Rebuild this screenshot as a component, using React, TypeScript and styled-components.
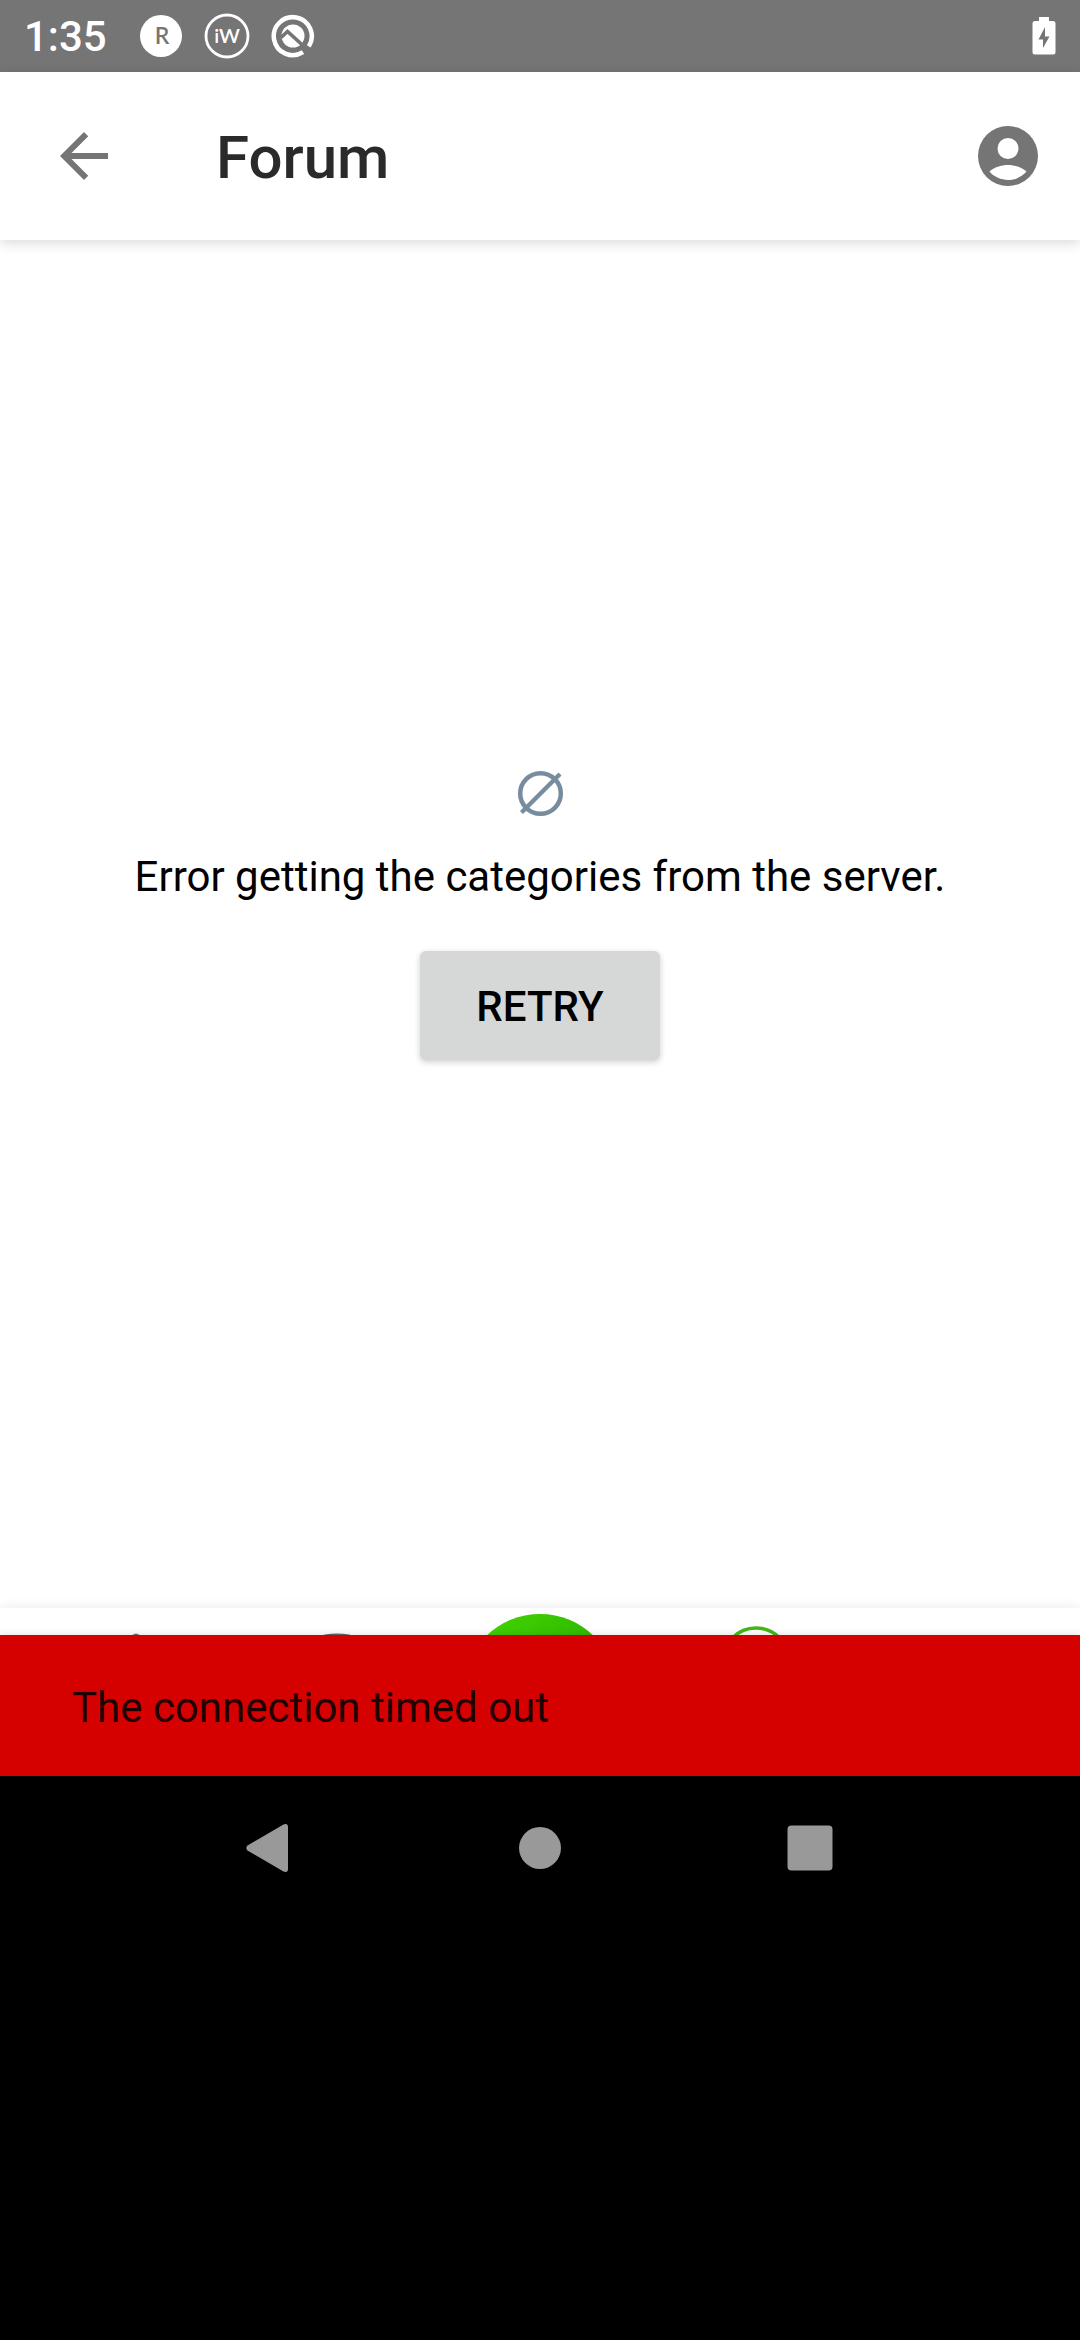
import React from "react";
import styled, { createGlobalStyle } from "styled-components";

const GlobalStyle = createGlobalStyle`
  * { box-sizing: border-box; }
  body { margin: 0; background: #000; font-family: Roboto, "Liberation Sans", sans-serif; }
  button { font-family: inherit; border: 0; padding: 0; cursor: pointer; }
`;

const Page = styled.div`
  min-height: 100vh;
  display: flex;
  flex-direction: column;
  background: #000;
  padding-bottom: 420px;
`;

const StatusBar = styled.div`
  height: 72px;
  flex: none;
  display: flex;
  align-items: center;
  justify-content: space-between;
  padding: 0 24px;
  background: #757575;
  color: #fff;
`;

const StatusGroup = styled.div`
  display: flex;
  align-items: center;
  gap: 20px;
`;

const Clock = styled.time`
  padding-top: 2px;
  font-size: 42px;
  line-height: 50px;
  font-weight: 500;
  margin-right: 11px;
`;

const AppBar = styled.header`
  height: 168px;
  flex: none;
  display: flex;
  align-items: center;
  padding: 0 36px 0 48px;
  background: #fff;
  box-shadow: 0 3px 12px rgba(0, 0, 0, 0.15);
  z-index: 1;
`;

const IconButton = styled.button`
  display: grid;
  place-items: center;
  width: 72px;
  height: 72px;
  background: transparent;
  color: #757575;
`;

const Title = styled.h1`
  flex: 1;
  margin: 0;
  padding: 4px 0 0 96px;
  font-size: 60px;
  line-height: 72px;
  font-weight: 500;
  color: #2a2a2a;
`;

const Content = styled.main`
  flex: 1;
  display: flex;
  flex-direction: column;
  align-items: center;
  justify-content: center;
  padding-bottom: 22px;
  background: #fff;
`;

const Message = styled.p`
  margin: 31px 0 49px;
  font-size: 42px;
  line-height: 50px;
  text-align: center;
  color: #000;
`;

const RetryButton = styled.button`
  min-width: 240px;
  height: 109px;
  padding-top: 2px;
  border-radius: 6px;
  background: #d6d8d7;
  color: #000;
  font-size: 42px;
  font-weight: 500;
  text-transform: uppercase;
  box-shadow: 0 2px 6px rgba(0, 0, 0, 0.2);
`;

const Bottom = styled.div`
  position: relative;
  flex: none;
  background: #fff;
  box-shadow: 0 0 12px rgba(0, 0, 0, 0.09);
`;

const TabBar = styled.nav`
  height: 168px;
  display: grid;
  grid-template-columns: repeat(5, 1fr);
  align-items: start;
  overflow: hidden;
`;

const Tab = styled.button`
  display: flex;
  justify-content: center;
  height: 168px;
  background: transparent;
`;

const Snackbar = styled.div`
  position: absolute;
  left: 0;
  right: 0;
  bottom: 0;
  padding: 48px 72px 43px;
  background: #d50000;
  color: rgba(0, 0, 0, 0.87);
  font-size: 42px;
  line-height: 50px;
  box-shadow: 0 0 8px rgba(0, 0, 0, 0.15);
`;

const SystemNav = styled.nav`
  height: 144px;
  flex: none;
  display: flex;
  align-items: center;
  justify-content: center;
  gap: 198px;
`;

const SystemButton = styled(IconButton)`
  color: #999;
`;

export default function App() {
  return (
    <>
      <GlobalStyle />
      <Page>
        <StatusBar>
          <StatusGroup>
            <Clock>1:35</Clock>
            <svg width="46" height="46" viewBox="0 0 46 46" aria-hidden="true">
              <circle cx="23" cy="23" r="21" fill="#fff" />
              <text x="24" y="31" textAnchor="middle" fontFamily="Lato, sans-serif" fontSize="23" fontWeight="600" fill="#757575">R</text>
            </svg>
            <svg width="46" height="46" viewBox="0 0 46 46" aria-hidden="true">
              <circle cx="23" cy="23" r="21" fill="none" stroke="#fff" strokeWidth="2.800" />
              <text x="23" y="30" textAnchor="middle" fontFamily="Lato, sans-serif" fontSize="20" fontWeight="600" fill="#fff">iW</text>
            </svg>
            <svg width="46" height="46" viewBox="0 0 46 46" aria-hidden="true">
              <path d="M33 39.200A19 19 0 1 1 38.800 33.400" fill="none" stroke="#fff" strokeWidth="4.500" />
              <circle cx="23" cy="23" r="11.500" fill="#fff" />
              <path d="M11 24.500L17.500 18.500L39 38" fill="none" stroke="#757575" strokeWidth="3.600" />
            </svg>
          </StatusGroup>
          <svg width="24" height="40" viewBox="0 0 24 40" aria-label="Battery charging">
            <path d="M7 1H17V5H21Q23.500 5 23.500 7.500V36Q23.500 38.500 21 38.500H3Q.5 38.500 .5 36V7.500Q.5 5 3 5H7Z" fill="#fff" />
            <path d="M13 11L6.500 23.500H11V32L17.500 20.500H13Z" fill="#757575" />
          </svg>
        </StatusBar>

        <AppBar>
          <IconButton aria-label="Back">
            <svg width="72" height="72" viewBox="0 0 24 24" fill="currentColor">
              <path d="M20 11H7.830l5.590-5.590L12 4l-8 8 8 8 1.410-1.410L7.830 13H20z" />
            </svg>
          </IconButton>
          <Title>Forum</Title>
          <IconButton aria-label="Account">
            <svg width="72" height="72" viewBox="0 0 24 24" fill="currentColor">
              <path fillRule="evenodd" d="M12 2a10 10 0 1 0 0 20 10 10 0 0 0 0-20zM12 6a3.500 3.500 0 1 1 0 7 3.500 3.500 0 0 1 0-7zM5.800 17.200C9 14.300 15 14.300 18.200 17.200C15 20.900 9 20.900 5.800 17.200z" />
            </svg>
          </IconButton>
        </AppBar>

        <Content>
          <svg width="54" height="54" viewBox="0 0 54 54" fill="none" stroke="#778c9e" strokeWidth="4.500" aria-hidden="true">
            <circle cx="27.500" cy="26.500" r="20.300" />
            <path d="M8.500 45.500L47 7" />
          </svg>
          <Message>Error getting the categories from the server.</Message>
          <RetryButton>Retry</RetryButton>
        </Content>

        <Bottom>
          <TabBar>
            <Tab aria-label="Home">
              <svg width="120" height="168" viewBox="0 0 120 168" fill="none" stroke="#757575" strokeWidth="3">
                <path d="M62 51L84 29Q88 25 92 29L114 51" />
              </svg>
            </Tab>
            <Tab aria-label="Search">
              <svg width="160" height="168" viewBox="0 0 160 168" fill="none" stroke="#666" strokeWidth="3">
                <circle cx="93" cy="86" r="59" />
              </svg>
            </Tab>
            <Tab aria-label="Start">
              <svg width="160" height="168" viewBox="0 0 160 168">
                <defs>
                  <linearGradient id="start" x1="0" y1="0" x2="1" y2="1">
                    <stop offset="0" stopColor="#46d900" />
                    <stop offset="1" stopColor="#1c9a00" />
                  </linearGradient>
                </defs>
                <circle cx="80" cy="83" r="77" fill="url(#start)" />
              </svg>
            </Tab>
            <Tab aria-label="Forum">
              <svg width="160" height="168" viewBox="0 0 160 168" fill="none" stroke="#43b814" strokeWidth="3.500">
                <circle cx="80" cy="53" r="33" />
              </svg>
            </Tab>
            <Tab aria-label="More" />
          </TabBar>
          <Snackbar role="alert">The connection timed out</Snackbar>
        </Bottom>

        <SystemNav>
          <SystemButton aria-label="System back">
            <svg width="72" height="72" viewBox="0 0 72 72" fill="currentColor">
              <path d="M13.500 33.500L49.500 12.500Q54 11 54 15V57Q54 61 49.500 59.500L13.500 38.500Q11 36 13.500 33.500Z" />
            </svg>
          </SystemButton>
          <SystemButton aria-label="Home screen">
            <svg width="72" height="72" viewBox="0 0 72 72" fill="currentColor">
              <circle cx="36" cy="36" r="21" />
            </svg>
          </SystemButton>
          <SystemButton aria-label="Recent apps">
            <svg width="72" height="72" viewBox="0 0 72 72" fill="currentColor">
              <rect x="13.500" y="13.500" width="45" height="45" rx="4" />
            </svg>
          </SystemButton>
        </SystemNav>
      </Page>
    </>
  );
}
